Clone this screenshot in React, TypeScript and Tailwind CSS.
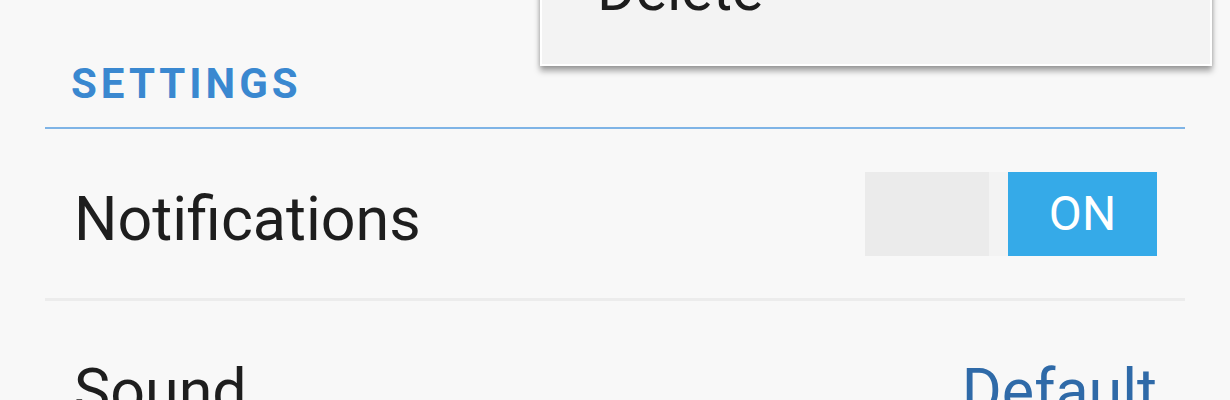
export default function App() {
  return (
    <div className="relative h-[400px] w-[1230px] overflow-hidden bg-[#f8f8f8] font-['Roboto',_'Noto_Sans',_sans-serif]">
      {/* Overflow menu, cut off at the top */}
      <div className="absolute left-[540px] top-[-134px] h-[200px] w-[672px] border-2 border-white bg-[#f3f3f3] shadow-[0_5px_6px_rgba(0,0,0,0.35),0_0_4px_rgba(0,0,0,0.15)]">
        <div className="pl-[55px] pt-[92px] text-[59px] leading-none text-[#1c1c1c]">Delete</div>
      </div>

      <div className="px-[45px] pt-[63px]">
        {/* Section header */}
        <div className="pl-[26px] text-[42px] font-bold leading-none tracking-[4px] text-[#3a88d0]">SETTINGS</div>
        <div className="mt-[22px] h-[2px] bg-[#7fb4e6]" />

        {/* Notifications row */}
        <div className="flex h-[169px] items-center justify-between pl-[29px] pr-[28px]">
          <span className="pt-[12px] text-[61px] leading-none text-[#1e1e1e]">Notifications</span>
          <div className="flex h-[84px] w-[292px]">
            <div className="w-[124px] bg-[#ebebeb]" />
            <div className="w-[19px] bg-[#f3f3f3]" />
            <div className="flex flex-1 items-center justify-center bg-[#35aae8] text-[48px] leading-none text-white">
              ON
            </div>
          </div>
        </div>
        <div className="h-[3px] bg-[#ececec]" />

        {/* Sound row */}
        <div className="flex h-[169px] items-center justify-between pl-[29px] pr-[28px]">
          <span className="pt-[12px] text-[61px] leading-none text-[#1e1e1e]">Sound</span>
          <span className="pt-[12px] text-[61px] leading-none text-[#2f6aa8]">Default</span>
        </div>
      </div>
    </div>
  );
}
